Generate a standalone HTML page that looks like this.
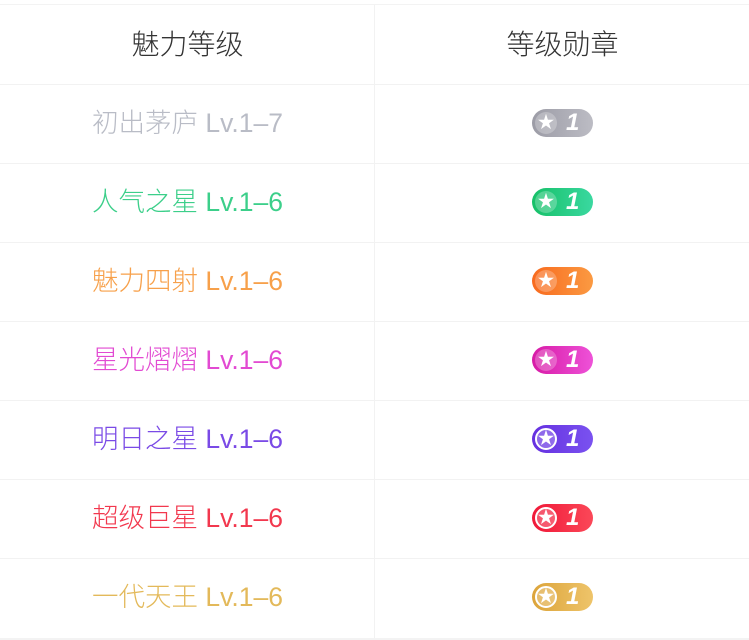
<!DOCTYPE html><html><head><meta charset="utf-8"><style>
body{margin:0;width:749px;height:640px;background:#fff;font-family:"Liberation Sans","Noto Sans CJK SC",sans-serif;overflow:hidden}
.g{position:absolute;left:0;top:637px;width:749px;height:3px;background:#f3f3f3}
.t{position:absolute;left:0;top:4px;width:749px;height:633px;background:#fff;border-top:1px solid #f3f3f3}
.r{position:absolute;left:0;width:749px;height:79px;border-bottom:1px solid #f2f2f2}
.c1{position:absolute;left:0;width:375px;height:79px;line-height:79px;text-align:center;font-size:26.5px;font-weight:300}
.h{font-size:28px;color:#333}
.v{position:absolute;left:374px;top:0;width:1px;height:633px;background:#f2f2f2}
.b{position:absolute;left:532px;top:25px;width:61px;height:28px;border-radius:14px}
.s{position:absolute;left:3px;top:3px;width:22px;height:22px;border-radius:11px;background:rgba(255,255,255,.25);color:#fff;font-size:17px;line-height:22px;text-align:center}
.n{position:absolute;left:34px;top:0;line-height:28px;color:#fff;font-style:italic;font-weight:bold;font-size:24px}
</style></head><body><div class="g"></div><div class="t">
<div class="v"></div>
<div class="r" style="top:0"><div class="c1 h">魅力等级</div><div class="c1 h" style="left:375px">等级勋章</div></div>
<div class="r" style="top:79px"><div class="c1" style="color:#b9bcc6">初出茅庐 Lv.1–7</div><div class="b" style="background:linear-gradient(90deg,#9c9ca6,#bcbcc4)"><div class="s">★</div><div class="n">1</div></div></div>
<div class="r" style="top:158px"><div class="c1" style="color:#3ccf8a">人气之星 Lv.1–6</div><div class="b" style="background:linear-gradient(90deg,#16c068,#3ad8a0)"><div class="s">★</div><div class="n">1</div></div></div>
<div class="r" style="top:237px"><div class="c1" style="color:#f7a04a">魅力四射 Lv.1–6</div><div class="b" style="background:linear-gradient(90deg,#f86a1e,#fb9a42)"><div class="s">★</div><div class="n">1</div></div></div>
<div class="r" style="top:316px"><div class="c1" style="color:#e24ad2">星光熠熠 Lv.1–6</div><div class="b" style="background:linear-gradient(90deg,#d71aa6,#ee52d8)"><div class="s">★</div><div class="n">1</div></div></div>
<div class="r" style="top:395px"><div class="c1" style="color:#7a4ae6">明日之星 Lv.1–6</div><div class="b" style="background:linear-gradient(90deg,#6530e0,#7a52f0)"><div class="s" style="border:2px solid #fff;width:18px;height:18px;line-height:18px;left:3px;top:3px">★</div><div class="n">1</div></div></div>
<div class="r" style="top:474px"><div class="c1" style="color:#f2384e">超级巨星 Lv.1–6</div><div class="b" style="background:linear-gradient(90deg,#f01838,#fb4858)"><div class="s" style="border:2px solid #fff;width:18px;height:18px;line-height:18px">★</div><div class="n">1</div></div></div>
<div class="r" style="top:553px;border-bottom:none"><div class="c1" style="color:#e3b95a">一代天王 Lv.1–6</div><div class="b" style="background:linear-gradient(90deg,#dca43a,#eec46a)"><div class="s" style="border:2px solid #fff;width:18px;height:18px;line-height:18px">★</div><div class="n">1</div></div></div>
</div></body></html>
